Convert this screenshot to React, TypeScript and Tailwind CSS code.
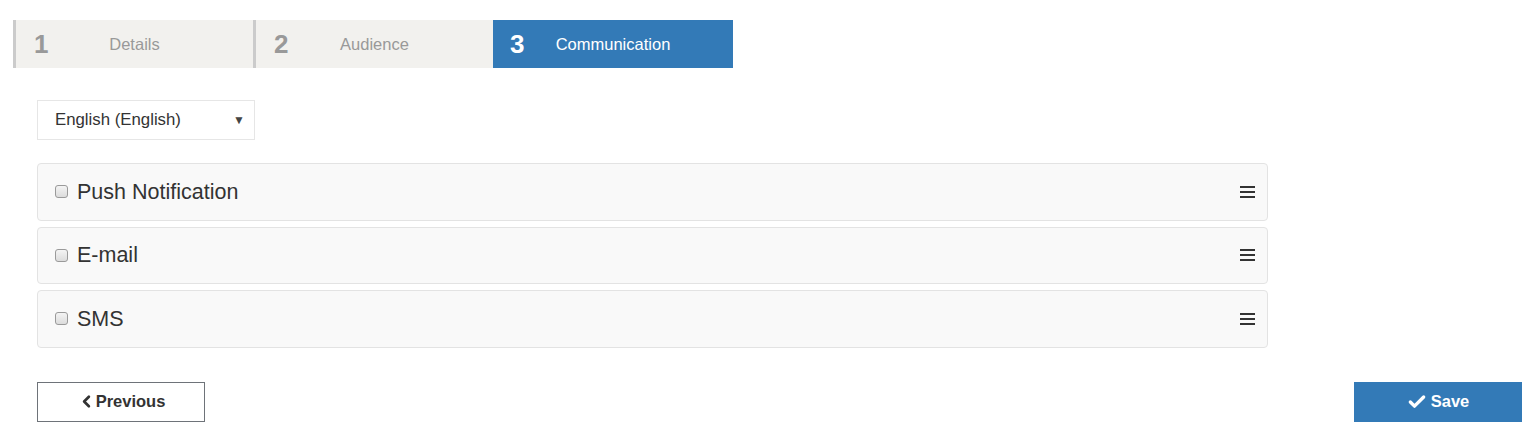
import { Check, ChevronLeft } from 'lucide-react';

const steps = [
  { n: '1', label: 'Details', active: false },
  { n: '2', label: 'Audience', active: false },
  { n: '3', label: 'Communication', active: true },
];

const channels = ['Push Notification', 'E-mail', 'SMS'];

function Hamburger() {
  return (
    <svg width="15" height="14" viewBox="0 0 15 14" className="text-[#333]">
      <rect x="0" y="1" width="15" height="2" fill="currentColor" />
      <rect x="0" y="6" width="15" height="2" fill="currentColor" />
      <rect x="0" y="11" width="15" height="2" fill="currentColor" />
    </svg>
  );
}

export default function App() {
  return (
    <div className="min-h-[430px] bg-white pt-5 font-['Liberation_Sans',Arial,sans-serif] text-[#333]">
      {/* wizard steps */}
      <div className="ml-[13px] flex">
        {steps.map((s) => (
          <div
            key={s.n}
            className={
              s.active
                ? 'grid h-12 w-60 grid-cols-[1fr_auto_1fr] items-center bg-[#337ab7] text-white'
                : 'grid h-12 w-60 grid-cols-[1fr_auto_1fr] items-center border-l-[3px] border-[#cbcbcb] bg-[#f2f1ee] text-[#999]'
            }
          >
            <span className={s.active ? 'ml-[17px] text-[26px] font-bold leading-none' : 'ml-[18px] text-[26px] font-bold leading-none'}>
              {s.n}
            </span>
            <span className="text-[16.5px]">{s.label}</span>
            <span />
          </div>
        ))}
      </div>

      <div className="px-[37px]">
        <div className="mt-8 flex h-10 w-[218px] items-center justify-between border border-[#e6e6e6] pl-[17px] pr-[9px] text-[16.8px] text-[#333]">
          <span>English (English)</span>
          <span className="text-[12px] text-[#444]">▼</span>
        </div>

        <div className="mt-[23px] flex w-[1231px] flex-col gap-[6px]">
          {channels.map((c) => (
            <div
              key={c}
              className="flex h-[57.5px] items-center justify-between rounded border border-[#e3e3e3] bg-[#f9f9f9] pl-[17px] pr-[12px]"
            >
              <label className="flex items-center gap-[9px]">
                <span className="h-[13px] w-[13px] rounded-[3px] border border-[#9a9a9a] bg-gradient-to-b from-[#f4f4f4] to-[#dcdcdc]" />
                <span className="text-[21.5px] text-[#333]">{c}</span>
              </label>
              <Hamburger />
            </div>
          ))}
        </div>

        <div className="mt-[34px] flex items-center justify-between">
          <button className="flex h-10 w-[168px] items-center justify-center gap-0 border border-[#6e7379] bg-white text-[16.5px] font-bold text-[#333]">
            <ChevronLeft size={19} strokeWidth={3.4} />
            Previous
          </button>
          <button className="-mr-[28px] flex h-10 w-[168px] items-center justify-center gap-[4px] bg-[#337ab7] text-[16.5px] font-bold text-white">
            <Check size={20} strokeWidth={4} />
            Save
          </button>
        </div>
      </div>
    </div>
  );
}
